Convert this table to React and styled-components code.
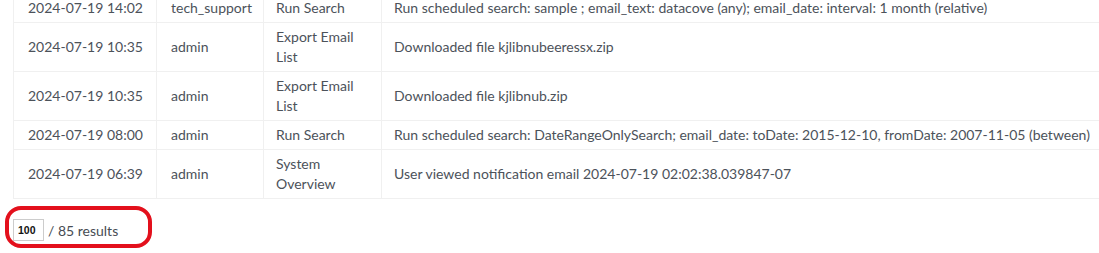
import React from "react";
import styled, { createGlobalStyle } from "styled-components";

const GlobalStyle = createGlobalStyle`
  html, body {
    margin: 0;
    padding: 0;
    background: #fff;
  }
  body {
    font-family: Lato, "Liberation Sans", sans-serif;
    color: #4c525a;
  }
`;

const Viewport = styled.div`
  width: 100vw;
  height: 100vh;
  overflow: hidden;
`;

const Page = styled.div`
  position: relative;
  width: 1400px;
  padding-left: 13px;
  margin-top: -7px;
`;

const Table = styled.table`
  border-collapse: collapse;
  table-layout: fixed;
  width: 1380px;
  font-size: 14px;
  line-height: 20px;
`;

const Cell = styled.td`
  box-sizing: border-box;
  border: 1px solid #f0f0f0;
  padding: 4px 13px 4px ${(p) => p.$pl || "14px"};
  vertical-align: middle;
  width: ${(p) => p.$w || "auto"};
`;

const Footer = styled.div`
  display: flex;
  align-items: center;
  gap: 4px;
  margin-top: 20px;
  font-size: 14px;
  color: #474c53;
`;

const PageInput = styled.input`
  box-sizing: border-box;
  width: 31px;
  height: 22px;
  border: 1px solid #ccc;
  padding: 0 0 0 4px;
  font-family: "Liberation Sans", Arial, sans-serif;
  font-size: 10.5px;
  font-weight: bold;
  color: #111;
  outline: none;
`;

const Highlight = styled.div`
  position: absolute;
  left: 5px;
  top: 213px;
  width: 139px;
  height: 34px;
  border: 4px solid #e3101c;
  border-radius: 16px;
  pointer-events: none;
`;

const rows = [
  ["2024-07-19 14:02", "tech_support", "Run Search", "Run scheduled search: sample ; email_text: datacove (any); email_date: interval: 1 month (relative)"],
  ["2024-07-19 10:35", "admin", "Export Email List", "Downloaded file kjlibnubeeressx.zip"],
  ["2024-07-19 10:35", "admin", "Export Email List", "Downloaded file kjlibnub.zip"],
  ["2024-07-19 08:00", "admin", "Run Search", "Run scheduled search: DateRangeOnlySearch; email_date: toDate: 2015-12-10, fromDate: 2007-11-05 (between)"],
  ["2024-07-19 06:39", "admin", "System Overview", "User viewed notification email 2024-07-19 02:02:38.039847-07"],
];

export default function App() {
  return (
    <Viewport>
      <GlobalStyle />
      <Page>
        <Table>
          <tbody>
            {rows.map((r, i) => (
              <tr key={i}>
                <Cell $w="143px">{r[0]}</Cell>
                <Cell $w="107px">{r[1]}</Cell>
                <Cell $w="118px" $pl="12px">{r[2]}</Cell>
                <Cell $pl="12px">{r[3]}</Cell>
              </tr>
            ))}
          </tbody>
        </Table>
        <Footer>
          <PageInput defaultValue="100" />
          <span>/ 85 results</span>
        </Footer>
        <Highlight />
      </Page>
    </Viewport>
  );
}
